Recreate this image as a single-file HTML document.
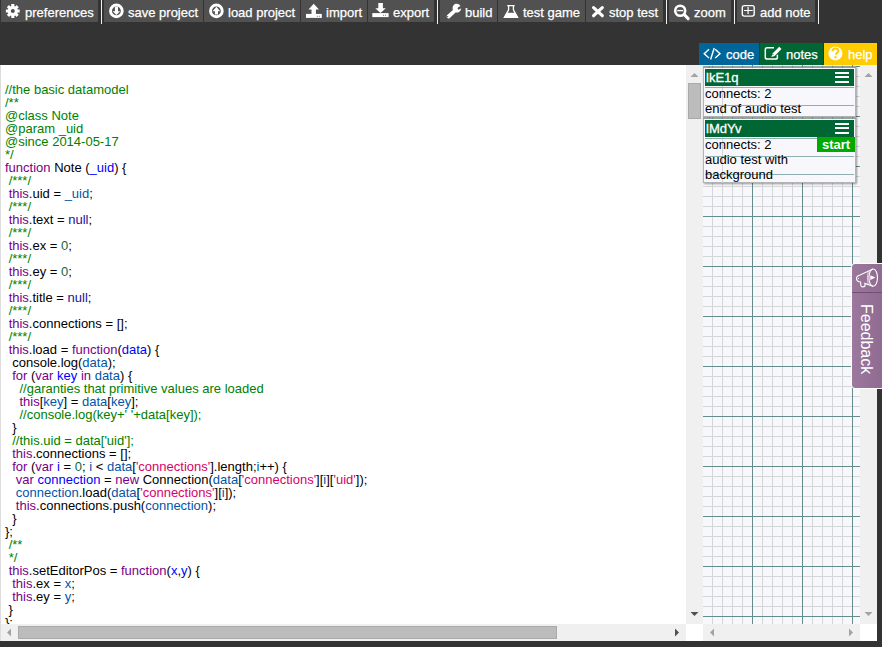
<!DOCTYPE html>
<html><head><meta charset="utf-8">
<style>
*{box-sizing:border-box}
html,body{margin:0;padding:0;width:882px;height:647px;overflow:hidden;background:#333;font-family:"Liberation Sans",sans-serif;font-size:13px}
.abs{position:absolute}
.btn{position:absolute;top:0;height:22px;background:#515151;color:#fff;white-space:nowrap}
.btn svg{position:absolute}
.btn span{position:absolute;top:5px;line-height:15px;-webkit-text-stroke:0.25px #fff}
.sep{position:absolute;top:0;width:1px;height:24px;background:#f0f0f0}
.tab{position:absolute;top:43px;height:22px;color:#fff}
.tab span{position:absolute;top:4px;line-height:15px;-webkit-text-stroke:0.25px #fff}
#editor{position:absolute;left:0;top:65px;width:686px;height:559px;background:#fff;overflow:hidden}
#gut{position:absolute;left:0;top:65px;width:1px;height:576px;background:#dcdcdc}
#code{position:absolute;left:5px;top:18px;}
.l{height:13px;line-height:13px;white-space:pre;color:#000}
.c{color:#008000}.k{color:#708}.a{color:#219}.n{color:#164}.d{color:#00f}.v2{color:#05a}.s{color:#d8006c}
.track{position:absolute;background:#f0f0f0}
.corner{position:absolute;background:#fff}
#grid{position:absolute;left:703px;top:65px;width:157px;height:559px;background-color:#f8f8fc;overflow:hidden}
.card{position:absolute;left:703px;width:153px;background:#f8f8fc;box-shadow:1px 1px 2px rgba(0,0,0,.4);border:1px solid #b4b4b4}
.card .hd{position:absolute;left:1px;right:1px;height:17px;background:#006633;color:#fff;font-size:13px;-webkit-text-stroke:0.3px #fff}
.card .t{position:absolute;left:1px;color:#000;line-height:15px;white-space:nowrap}
#fb{position:absolute;left:851px;top:263px;width:40px;height:126px;background:linear-gradient(90deg,#9d789d,#8d688e);border:1px solid #fff;border-radius:4px 0 0 4px}
</style></head><body>
<!-- toolbar -->
<div class="btn" style="left:1px;width:97px">
 <span style="left:24px">preferences</span></div>
<div class="sep" style="left:101px"></div>
<div class="btn" style="left:104px;width:99px">
 <span style="left:24px">save project</span></div>
<div class="btn" style="left:204px;width:96px">
 <span style="left:24px">load project</span></div>
<div class="btn" style="left:301px;width:66px">
 <span style="left:25px">import</span></div>
<div class="btn" style="left:368px;width:66px">
 <span style="left:25px">export</span></div>
<div class="sep" style="left:437px"></div>
<div class="btn" style="left:440px;width:57px">
 <span style="left:25px">build</span></div>
<div class="btn" style="left:498px;width:87px">
 <span style="left:25px">test game</span></div>
<div class="btn" style="left:586px;width:77px">
 <span style="left:23px">stop test</span></div>
<div class="sep" style="left:666px"></div>
<div class="btn" style="left:669px;width:62px">
 <span style="left:25px">zoom</span></div>
<div class="sep" style="left:734px"></div>
<div class="btn" style="left:737px;width:78px">
 <span style="left:23px">add note</span></div>
<div class="sep" style="left:818px"></div>

<!-- tabs -->
<div class="tab" style="left:699px;width:60px;background:#006699">
 <span style="left:27px">code</span></div>
<div class="tab" style="left:760px;width:63px;background:#006633">
 <span style="left:26px">notes</span></div>
<div class="tab" style="left:824px;width:53px;background:#ffcc00">
 <span style="left:24px">help</span></div>

<svg class="abs" style="left:0;top:0;z-index:5" width="882" height="66">
<path fill="#fff" fill-rule="evenodd" d="M11.28 6.03 L11.20 4.08 L14.40 4.08 L14.32 6.03 L15.24 6.41 L16.56 4.98 L18.82 7.24 L17.39 8.56 L17.77 9.48 L19.72 9.40 L19.72 12.60 L17.77 12.52 L17.39 13.44 L18.82 14.76 L16.56 17.02 L15.24 15.59 L14.32 15.97 L14.40 17.92 L11.20 17.92 L11.28 15.97 L10.36 15.59 L9.04 17.02 L6.78 14.76 L8.21 13.44 L7.83 12.52 L5.88 12.60 L5.88 9.40 L7.83 9.48 L8.21 8.56 L6.78 7.24 L9.04 4.98 L10.36 6.41z M12.8 9.0a2.0 2.0 0 1 0 0.001 0z"/>
<circle cx="116.4" cy="10.9" r="5.85" fill="none" stroke="#fff" stroke-width="2.9"/>
<path fill="#fff" d="M114.9 6.8h3.1v4.4h2.2L116.4 15l-3.7-3.8h2.2z"/>
<circle cx="216.4" cy="10.9" r="5.85" fill="none" stroke="#fff" stroke-width="2.9"/>
<path fill="#fff" d="M214.9 14.6h3.1v-3.4h2.2L216.4 6.8l-3.8 4.4h2.3z"/>
<path fill="#fff" d="M313.7 3.8L319 9.5h-3.1V14h-4.4V9.5h-3z"/>
<rect x="306" y="13.9" width="15.8" height="4" fill="#fff"/>
<rect x="316.8" y="15.8" width="1" height="1" fill="#777"/><rect x="318.8" y="15.8" width="1" height="1" fill="#777"/>
<path fill="#fff" d="M378.3 3h4.6v5.3h2.9l-5.3 4.8-5.2-4.8h3z"/>
<rect x="372.3" y="13.1" width="16.3" height="4" fill="#fff"/>
<rect x="383" y="14.8" width="1" height="1" fill="#777"/><rect x="385" y="14.8" width="1" height="1" fill="#777"/>
<path fill="#fff" fill-rule="evenodd" d="M455.5 3.8a4.6 4.6 0 0 1 5 2.2l-2.6 1.6-.3 1.3 1.1.9 2.5-1.5a4.6 4.6 0 0 1-5.6 4.2l-5.8 5.4c-.8.7-2 .7-2.7-.1-.7-.8-.6-2 .2-2.7l5.6-5.2a4.6 4.6 0 0 1 2.6-6.1zM447.5 15.9a.7.7 0 1 0 0 1.4.7.7 0 1 0 0-1.4z"/>
<path fill="none" stroke="#fff" stroke-width="1.3" d="M507.2 5.6h7.5M508.6 5.6v4.3L504.4 17.4h13.2L513.4 9.9V5.6"/>
<path fill="#fff" d="M506.6 12.8h8.8l2.8 5.2h-14.4z"/>
<path fill="none" stroke="#fff" stroke-width="3.2" stroke-linecap="round" d="M593.6 7.6l8.7 8.1M602.3 7.6l-8.7 8.1"/>
<circle cx="680.2" cy="10.7" r="5" fill="none" stroke="#fff" stroke-width="2.6"/>
<path stroke="#fff" stroke-width="1.4" d="M677.2 10.6h6"/>
<path stroke="#fff" stroke-width="3" stroke-linecap="round" d="M684.8 15.1l3.4 3.5"/>
<rect x="742.3" y="5.6" width="11.9" height="10.5" rx="2" fill="none" stroke="#fff" stroke-width="1.4"/>
<path stroke="#fff" stroke-width="1.2" d="M744 10.5h8.7M748.1 7v7"/>
<path fill="none" stroke="#fff" stroke-width="1.4" d="M709 49.3L704.2 53.7 709 58.1M715.2 49.3L720 53.7 715.2 58.1M714.2 48L710.6 59.5"/>
<path fill="none" stroke="#fff" stroke-width="1.5" d="M774 47.8h-6.8c-1.2 0-1.9.7-1.9 1.9v7.5c0 1.2.7 1.9 1.9 1.9h8.3c1.2 0 1.9-.7 1.9-1.9v-2.5"/>
<path fill="#fff" d="M779.2 46.8l2.3 2.3-6.9 6.9-3.2.9.9-3.2z"/>
<circle cx="772.9" cy="54.6" r="0.6" fill="#006633"/>
<circle cx="835.4" cy="53.4" r="7" fill="#fff"/>
<path fill="none" stroke="#ffcc00" stroke-width="2" d="M832.6 51.2c0-1.7 1.2-2.7 2.9-2.7s2.9 1 2.9 2.4c0 1.9-2.4 1.9-2.4 3.9"/>
<rect x="834.5" y="56.3" width="2.1" height="2" fill="#ffcc00"/>
</svg>
<!-- editor -->
<div id="editor"><div id="code">
<div class="l"><span class="c">//the basic datamodel</span></div>
<div class="l"><span class="c">/**</span></div>
<div class="l"><span class="c">@class Note</span></div>
<div class="l"><span class="c">@param _uid</span></div>
<div class="l"><span class="c">@since 2014-05-17</span></div>
<div class="l"><span class="c">*/</span></div>
<div class="l"><span class="k">function</span> Note (<span class="d">_uid</span>) {</div>
<div class="l"> <span class="c">/***/</span></div>
<div class="l"> <span class="k">this</span>.uid = <span class="v2">_uid</span>;</div>
<div class="l"> <span class="c">/***/</span></div>
<div class="l"> <span class="k">this</span>.text = <span class="a">null</span>;</div>
<div class="l"> <span class="c">/***/</span></div>
<div class="l"> <span class="k">this</span>.ex = <span class="n">0</span>;</div>
<div class="l"> <span class="c">/***/</span></div>
<div class="l"> <span class="k">this</span>.ey = <span class="n">0</span>;</div>
<div class="l"> <span class="c">/***/</span></div>
<div class="l"> <span class="k">this</span>.title = <span class="a">null</span>;</div>
<div class="l"> <span class="c">/***/</span></div>
<div class="l"> <span class="k">this</span>.connections = [];</div>
<div class="l"> <span class="c">/***/</span></div>
<div class="l"> <span class="k">this</span>.load = <span class="k">function</span>(<span class="d">data</span>) {</div>
<div class="l">  console.log(<span class="v2">data</span>);</div>
<div class="l">  <span class="k">for</span> (<span class="k">var</span> <span class="d">key</span> <span class="k">in</span> <span class="v2">data</span>) {</div>
<div class="l">    <span class="c">//garanties that primitive values are loaded</span></div>
<div class="l">    <span class="k">this</span>[<span class="v2">key</span>] = <span class="v2">data</span>[<span class="v2">key</span>];</div>
<div class="l">    <span class="c">//console.log(key+' '+data[key]);</span></div>
<div class="l">  }</div>
<div class="l">  <span class="c">//this.uid = data['uid'];</span></div>
<div class="l">  <span class="k">this</span>.connections = [];</div>
<div class="l">  <span class="k">for</span> (<span class="k">var</span> <span class="d">i</span> = <span class="n">0</span>; <span class="v2">i</span> &lt; <span class="v2">data</span>[<span class="s">'connections'</span>].length;<span class="v2">i</span>++) {</div>
<div class="l">   <span class="k">var</span> <span class="d">connection</span> = <span class="k">new</span> Connection(<span class="v2">data</span>[<span class="s">'connections'</span>][<span class="v2">i</span>][<span class="s">'uid'</span>]);</div>
<div class="l">   <span class="v2">connection</span>.load(<span class="v2">data</span>[<span class="s">'connections'</span>][<span class="v2">i</span>]);</div>
<div class="l">   <span class="k">this</span>.connections.push(<span class="v2">connection</span>);</div>
<div class="l">  }</div>
<div class="l">};</div>
<div class="l"> <span class="c">/**</span></div>
<div class="l"> <span class="c">*/</span></div>
<div class="l"> <span class="k">this</span>.setEditorPos = <span class="k">function</span>(<span class="d">x</span>,<span class="d">y</span>) {</div>
<div class="l">  <span class="k">this</span>.ex = <span class="v2">x</span>;</div>
<div class="l">  <span class="k">this</span>.ey = <span class="v2">y</span>;</div>
<div class="l"> }</div>
<div class="l">};</div>
</div></div>
<div class="track" style="left:686px;top:65px;width:17px;height:559px"></div>
<div class="abs" style="left:688px;top:83px;width:13px;height:36px;background:#bcbcbc;border:1px solid #aaa"></div>
<svg class="abs" style="left:690px;top:73px" width="9" height="4"><path d="M0.5 4L4.5 0 8.5 4z" fill="#a3a3a3"/></svg>
<svg class="abs" style="left:690px;top:612px" width="9" height="4"><path d="M0.5 0L4.5 4 8.5 0z" fill="#505050"/></svg>
<div class="track" style="left:0px;top:624px;width:686px;height:17px"></div>
<div class="abs" style="left:18px;top:626px;width:539px;height:13px;background:#bcbcbc;border:1px solid #aaa"></div>
<svg class="abs" style="left:7px;top:628px" width="4" height="9"><path d="M4 0.5L0 4.5 4 8.5z" fill="#a3a3a3"/></svg>
<svg class="abs" style="left:675px;top:628px" width="4" height="9"><path d="M0 0.5L4 4.5 0 8.5z" fill="#505050"/></svg>
<div class="corner" style="left:686px;top:624px;width:17px;height:17px"></div>
<div id="gut"></div>

<!-- right panel -->
<div id="grid">
<svg width="157" height="559" style="position:absolute;left:0;top:0">
<line x1="9.5" y1="0" x2="9.5" y2="559" stroke="#d4d7d7" stroke-width="1"/>
<line x1="19.5" y1="0" x2="19.5" y2="559" stroke="#d4d7d7" stroke-width="1"/>
<line x1="29.5" y1="0" x2="29.5" y2="559" stroke="#d4d7d7" stroke-width="1"/>
<line x1="39.5" y1="0" x2="39.5" y2="559" stroke="#d4d7d7" stroke-width="1"/>
<line x1="59.5" y1="0" x2="59.5" y2="559" stroke="#d4d7d7" stroke-width="1"/>
<line x1="69.5" y1="0" x2="69.5" y2="559" stroke="#d4d7d7" stroke-width="1"/>
<line x1="79.5" y1="0" x2="79.5" y2="559" stroke="#d4d7d7" stroke-width="1"/>
<line x1="89.5" y1="0" x2="89.5" y2="559" stroke="#d4d7d7" stroke-width="1"/>
<line x1="109.5" y1="0" x2="109.5" y2="559" stroke="#d4d7d7" stroke-width="1"/>
<line x1="119.5" y1="0" x2="119.5" y2="559" stroke="#d4d7d7" stroke-width="1"/>
<line x1="129.5" y1="0" x2="129.5" y2="559" stroke="#d4d7d7" stroke-width="1"/>
<line x1="139.5" y1="0" x2="139.5" y2="559" stroke="#d4d7d7" stroke-width="1"/>
<line x1="159.5" y1="0" x2="159.5" y2="559" stroke="#d4d7d7" stroke-width="1"/>
<line x1="0" y1="11.5" x2="157" y2="11.5" stroke="#d4d7d7" stroke-width="1"/>
<line x1="0" y1="21.5" x2="157" y2="21.5" stroke="#d4d7d7" stroke-width="1"/>
<line x1="0" y1="31.5" x2="157" y2="31.5" stroke="#d4d7d7" stroke-width="1"/>
<line x1="0" y1="41.5" x2="157" y2="41.5" stroke="#d4d7d7" stroke-width="1"/>
<line x1="0" y1="61.5" x2="157" y2="61.5" stroke="#d4d7d7" stroke-width="1"/>
<line x1="0" y1="71.5" x2="157" y2="71.5" stroke="#d4d7d7" stroke-width="1"/>
<line x1="0" y1="81.5" x2="157" y2="81.5" stroke="#d4d7d7" stroke-width="1"/>
<line x1="0" y1="91.5" x2="157" y2="91.5" stroke="#d4d7d7" stroke-width="1"/>
<line x1="0" y1="111.5" x2="157" y2="111.5" stroke="#d4d7d7" stroke-width="1"/>
<line x1="0" y1="121.5" x2="157" y2="121.5" stroke="#d4d7d7" stroke-width="1"/>
<line x1="0" y1="131.5" x2="157" y2="131.5" stroke="#d4d7d7" stroke-width="1"/>
<line x1="0" y1="141.5" x2="157" y2="141.5" stroke="#d4d7d7" stroke-width="1"/>
<line x1="0" y1="161.5" x2="157" y2="161.5" stroke="#d4d7d7" stroke-width="1"/>
<line x1="0" y1="171.5" x2="157" y2="171.5" stroke="#d4d7d7" stroke-width="1"/>
<line x1="0" y1="181.5" x2="157" y2="181.5" stroke="#d4d7d7" stroke-width="1"/>
<line x1="0" y1="191.5" x2="157" y2="191.5" stroke="#d4d7d7" stroke-width="1"/>
<line x1="0" y1="211.5" x2="157" y2="211.5" stroke="#d4d7d7" stroke-width="1"/>
<line x1="0" y1="221.5" x2="157" y2="221.5" stroke="#d4d7d7" stroke-width="1"/>
<line x1="0" y1="231.5" x2="157" y2="231.5" stroke="#d4d7d7" stroke-width="1"/>
<line x1="0" y1="241.5" x2="157" y2="241.5" stroke="#d4d7d7" stroke-width="1"/>
<line x1="0" y1="261.5" x2="157" y2="261.5" stroke="#d4d7d7" stroke-width="1"/>
<line x1="0" y1="271.5" x2="157" y2="271.5" stroke="#d4d7d7" stroke-width="1"/>
<line x1="0" y1="281.5" x2="157" y2="281.5" stroke="#d4d7d7" stroke-width="1"/>
<line x1="0" y1="291.5" x2="157" y2="291.5" stroke="#d4d7d7" stroke-width="1"/>
<line x1="0" y1="311.5" x2="157" y2="311.5" stroke="#d4d7d7" stroke-width="1"/>
<line x1="0" y1="321.5" x2="157" y2="321.5" stroke="#d4d7d7" stroke-width="1"/>
<line x1="0" y1="331.5" x2="157" y2="331.5" stroke="#d4d7d7" stroke-width="1"/>
<line x1="0" y1="341.5" x2="157" y2="341.5" stroke="#d4d7d7" stroke-width="1"/>
<line x1="0" y1="361.5" x2="157" y2="361.5" stroke="#d4d7d7" stroke-width="1"/>
<line x1="0" y1="371.5" x2="157" y2="371.5" stroke="#d4d7d7" stroke-width="1"/>
<line x1="0" y1="381.5" x2="157" y2="381.5" stroke="#d4d7d7" stroke-width="1"/>
<line x1="0" y1="391.5" x2="157" y2="391.5" stroke="#d4d7d7" stroke-width="1"/>
<line x1="0" y1="411.5" x2="157" y2="411.5" stroke="#d4d7d7" stroke-width="1"/>
<line x1="0" y1="421.5" x2="157" y2="421.5" stroke="#d4d7d7" stroke-width="1"/>
<line x1="0" y1="431.5" x2="157" y2="431.5" stroke="#d4d7d7" stroke-width="1"/>
<line x1="0" y1="441.5" x2="157" y2="441.5" stroke="#d4d7d7" stroke-width="1"/>
<line x1="0" y1="461.5" x2="157" y2="461.5" stroke="#d4d7d7" stroke-width="1"/>
<line x1="0" y1="471.5" x2="157" y2="471.5" stroke="#d4d7d7" stroke-width="1"/>
<line x1="0" y1="481.5" x2="157" y2="481.5" stroke="#d4d7d7" stroke-width="1"/>
<line x1="0" y1="491.5" x2="157" y2="491.5" stroke="#d4d7d7" stroke-width="1"/>
<line x1="0" y1="511.5" x2="157" y2="511.5" stroke="#d4d7d7" stroke-width="1"/>
<line x1="0" y1="521.5" x2="157" y2="521.5" stroke="#d4d7d7" stroke-width="1"/>
<line x1="0" y1="531.5" x2="157" y2="531.5" stroke="#d4d7d7" stroke-width="1"/>
<line x1="0" y1="541.5" x2="157" y2="541.5" stroke="#d4d7d7" stroke-width="1"/>
<line x1="49.5" y1="0" x2="49.5" y2="559" stroke="#658c8c" stroke-width="1"/>
<line x1="99.5" y1="0" x2="99.5" y2="559" stroke="#658c8c" stroke-width="1"/>
<line x1="149.5" y1="0" x2="149.5" y2="559" stroke="#658c8c" stroke-width="1"/>
<line x1="0" y1="1.5" x2="157" y2="1.5" stroke="#658c8c" stroke-width="1"/>
<line x1="0" y1="51.5" x2="157" y2="51.5" stroke="#658c8c" stroke-width="1"/>
<line x1="0" y1="101.5" x2="157" y2="101.5" stroke="#658c8c" stroke-width="1"/>
<line x1="0" y1="151.5" x2="157" y2="151.5" stroke="#658c8c" stroke-width="1"/>
<line x1="0" y1="201.5" x2="157" y2="201.5" stroke="#658c8c" stroke-width="1"/>
<line x1="0" y1="251.5" x2="157" y2="251.5" stroke="#658c8c" stroke-width="1"/>
<line x1="0" y1="301.5" x2="157" y2="301.5" stroke="#658c8c" stroke-width="1"/>
<line x1="0" y1="351.5" x2="157" y2="351.5" stroke="#658c8c" stroke-width="1"/>
<line x1="0" y1="401.5" x2="157" y2="401.5" stroke="#658c8c" stroke-width="1"/>
<line x1="0" y1="451.5" x2="157" y2="451.5" stroke="#658c8c" stroke-width="1"/>
<line x1="0" y1="501.5" x2="157" y2="501.5" stroke="#658c8c" stroke-width="1"/>
<line x1="0" y1="551.5" x2="157" y2="551.5" stroke="#658c8c" stroke-width="1"/>
</svg>
</div>
<div class="track" style="left:860px;top:65px;width:17px;height:559px"></div>
<svg class="abs" style="left:864px;top:73px" width="9" height="4"><path d="M0.5 4L4.5 0 8.5 4z" fill="#a3a3a3"/></svg>
<svg class="abs" style="left:864px;top:612px" width="9" height="4"><path d="M0.5 0L4.5 4 8.5 0z" fill="#a3a3a3"/></svg>
<div class="track" style="left:703px;top:624px;width:157px;height:17px"></div>
<svg class="abs" style="left:710px;top:628px" width="4" height="9"><path d="M4 0.5L0 4.5 4 8.5z" fill="#a3a3a3"/></svg>
<svg class="abs" style="left:849px;top:628px" width="4" height="9"><path d="M0 0.5L4 4.5 0 8.5z" fill="#a3a3a3"/></svg>
<div class="corner" style="left:860px;top:624px;width:17px;height:17px"></div>

<!-- cards -->
<div class="card" style="top:66px;height:51px">
 <div class="abs" style="left:-1px;right:-1px;top:-1px;height:2px;background:repeating-linear-gradient(90deg,#788a8a 0 1px,#97a3a3 1px 10px);background-position:9px 0"></div>
 <div class="abs" style="left:18px;top:19px;width:1px;height:30px;background:#d6d6da"></div>
 <div class="abs" style="left:1px;right:1px;top:20px;height:1px;background:#8fb0b0"></div>
 <div class="abs" style="left:1px;right:1px;top:38px;height:1px;background:#8fb0b0"></div>
 <div class="hd" style="top:2px"><span style="position:absolute;left:1px;top:1px;line-height:15px">lkE1q</span>
  <svg style="position:absolute;right:5px;top:3px" width="14" height="11"><path d="M0 1h14M0 5h14M0 10h14" stroke="#fff" stroke-width="2"/></svg></div>
 <div class="t" style="top:19px">connects: 2</div>
 <div class="t" style="top:34px">end of audio test</div>
</div>
<div class="card" style="top:117px;height:66px">
 <div class="abs" style="left:-1px;right:-1px;top:-1px;height:2px;background:repeating-linear-gradient(90deg,#788a8a 0 1px,#97a3a3 1px 10px);background-position:9px 0"></div>
 <div class="abs" style="left:18px;top:19px;width:1px;height:46px;background:#d6d6da"></div>
 <div class="abs" style="left:1px;right:1px;top:20px;height:1px;background:#8fb0b0"></div>
 <div class="abs" style="left:1px;right:1px;top:38px;height:1px;background:#8fb0b0"></div>
 <div class="abs" style="left:1px;right:1px;top:56px;height:1px;background:#8fb0b0"></div>
 <div class="hd" style="top:2px"><span style="position:absolute;left:1px;top:1px;line-height:15px">lMdYv</span>
  <svg style="position:absolute;right:5px;top:3px" width="14" height="11"><path d="M0 1h14M0 5h14M0 10h14" stroke="#fff" stroke-width="2"/></svg></div>
 <div class="abs" style="right:0px;top:19px;width:38px;height:15px;background:#00aa00;color:#fff;font-weight:bold;line-height:15px;text-align:center">start</div>
 <div class="t" style="top:19px">connects: 2</div>
 <div class="t" style="top:34px">audio test with</div>
 <div class="t" style="top:49px">background</div>
</div>

<!-- feedback -->
<div id="fb">
 <svg style="position:absolute;left:0;top:0" width="30" height="28" viewBox="0 0 30 28"><path d="M21 5L7.5 11.2C5.5 11.6 4.5 12.8 4.5 14.5S5.5 17.5 7.5 17.8L8.6 18.2 8.8 21.2C8.9 22.3 9.7 22.9 10.9 22.9S13 22.3 13 21.2L12.9 19.4 21 22.2" fill="none" stroke="#fff" stroke-width="1.1"/><ellipse cx="21.2" cy="13.6" rx="4.3" ry="8.6" fill="none" stroke="#fff" stroke-width="1.1"/><path d="M16.2 7.5Q14.6 13.6 16.2 19.7" fill="none" stroke="#fff" stroke-width="0.7"/><path d="M18.3 11.3L23.5 13.6 18.3 15.9z" fill="#fff"/><circle cx="6.5" cy="14.5" r="0.6" fill="#fff"/></svg>
 <div class="abs" style="left:0;top:28px;width:40px;height:1px;background:#6f4f72"></div>
 <div class="abs" style="left:4px;top:40px;color:#fff;font-size:16px;transform-origin:0 0;transform:translate(19px,0px) rotate(90deg);white-space:nowrap">Feedback</div>
</div>
</body></html>
